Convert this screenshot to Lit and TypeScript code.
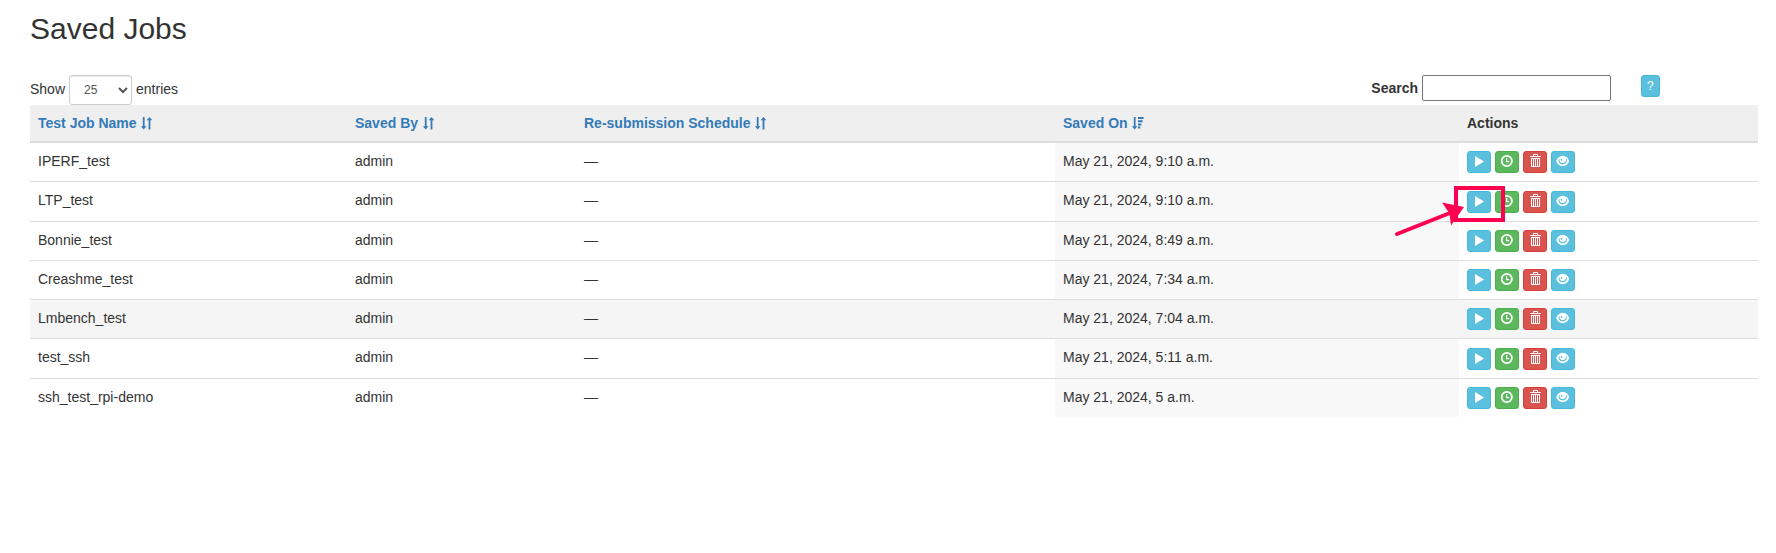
import { LitElement, html, css, svg, nothing } from "lit";
import { customElement, state } from "lit/decorators.js";
import { classMap } from "lit/directives/class-map.js";

interface Job {
  name: string;
  user: string;
  schedule: string;
  saved: string;
  active?: boolean;
  marked?: boolean;
}

const JOBS: Job[] = [
  { name: "IPERF_test", user: "admin", schedule: "—", saved: "May 21, 2024, 9:10 a.m." },
  { name: "LTP_test", user: "admin", schedule: "—", saved: "May 21, 2024, 9:10 a.m.", marked: true },
  { name: "Bonnie_test", user: "admin", schedule: "—", saved: "May 21, 2024, 8:49 a.m." },
  { name: "Creashme_test", user: "admin", schedule: "—", saved: "May 21, 2024, 7:34 a.m." },
  { name: "Lmbench_test", user: "admin", schedule: "—", saved: "May 21, 2024, 7:04 a.m.", active: true },
  { name: "test_ssh", user: "admin", schedule: "—", saved: "May 21, 2024, 5:11 a.m." },
  { name: "ssh_test_rpi-demo", user: "admin", schedule: "—", saved: "May 21, 2024, 5 a.m." },
];

const COLUMNS = [
  { label: "Test Job Name", sorted: false },
  { label: "Saved By", sorted: false },
  { label: "Re-submission Schedule", sorted: false },
  { label: "Saved On", sorted: true },
];

const ICONS = {
  sort: svg`<path d="M2.8 0h1.8v9.3h1.9l-2.8 3.2l-2.8 -3.2h1.9z M8.6 12.5v-9.3h-1.9l2.8 -3.2l2.8 3.2h-1.9v9.3z"/>`,
  sortDesc: svg`<path d="M2.8 0h1.8v9.3h1.9l-2.8 3.2l-2.8 -3.2h1.9z M7 0h5.6v2h-5.6z M7 3.2h4.6v2h-4.6z M7 6.4h3.4v2h-3.4z M7 9.6h2.3v2h-2.3z"/>`,
  play: svg`<path d="M2 1L11 6.5L2 12z"/>`,
  clock: svg`<path fill-rule="evenodd" d="M5.8 0a6 6 0 1 1 0 12a6 6 0 1 1 0 -12z M5.8 1.8a4.2 4.2 0 1 0 0 8.4a4.2 4.2 0 1 0 0 -8.4z M5 3h1.2v3h2v1.2h-3.2z"/>`,
  trash: svg`<path transform="matrix(0.01 0 0 -0.01 0 12)" fill-rule="evenodd" d="M500 1300h300q41 0 70.5 -29.5t29.5 -70.5v-100h275q10 0 17.5 -7.5t7.5 -17.5v-75h-1100v75q0 10 7.5 17.5t17.5 7.5h275v100q0 41 29.5 70.5t70.5 29.5zM500 1200v-100h300v100h-300zM1100 900v-800q0 -41 -29.5 -70.5t-70.5 -29.5h-700q-41 0 -70.5 29.5t-29.5 70.5v800h900zM300 800v-700h100v700h-100zM500 800v-700h100v700h-100zM700 800v-700h100v700h-100zM900 800v-700h100v700h-100z"/>`,
  eye: svg`<path fill-rule="evenodd" d="M5.7 0.8C8.7 0.8 11.2 3.1 12.2 6C11.2 8.9 8.7 11.2 5.7 11.2C2.7 11.2 0.2 8.9 -0.8 6C0.2 3.1 2.7 0.8 5.7 0.8z M1.7 4.4C1 7.2 2.9 9.3 5.7 9.3C8.5 9.3 10.4 7.2 9.7 4.4L8.8 3.5C9.5 6.2 8.1 8 5.7 8C3.3 8 1.9 6.2 2.6 3.5z M4.7 3.8a1.1 1.1 0 0 0 -1 1.2l0.8 0.9l1.2 -0.9z"/>`,
};

@customElement("app-root")
export class AppRoot extends LitElement {
  @state() private query = "";

  static styles = css`
    :host {
      display: block;
      box-sizing: border-box;
      padding: 12px 18px 40px 30px;
      background: #fff;
      color: #333;
      font: 14px/20px "Liberation Sans", Arial, sans-serif;
    }
    .title {
      margin: 0 0 30px;
      font-size: 30px;
      line-height: 33px;
      font-weight: 400;
    }
    .toolbar {
      display: flex;
      align-items: flex-start;
    }
    .length { flex: 1; }
    .length label {
      display: flex;
      align-items: baseline;
      gap: 4px;
    }
    select {
      box-sizing: border-box;
      width: 63px;
      height: 30px;
      padding: 5px 10px;
      border: 1px solid #ccc;
      border-radius: 3px;
      background: #fff;
      box-shadow: inset 0 1px 1px rgba(0, 0, 0, 0.075);
      color: #555;
      font: 12px/18px "Liberation Sans", Arial, sans-serif;
    }
    .search {
      display: flex;
      align-items: center;
      gap: 4px;
      font-weight: 700;
    }
    .search input {
      box-sizing: border-box;
      width: 189px;
      height: 26px;
      padding: 1px 4px;
      border: 1px solid #767676;
      border-radius: 2px;
      background: #fff;
      color: inherit;
      font: 14px/20px "Liberation Sans", Arial, sans-serif;
    }
    .help {
      display: flex;
      width: 117px;
      margin-left: 30px;
    }
    .btn {
      display: inline-block;
      box-sizing: border-box;
      height: 22px;
      padding: 1px 5px;
      border: 1px solid #46b8da;
      border-radius: 3px;
      background: #5bc0de;
      color: #fff;
      font: 12px/18px "Liberation Sans", Arial, sans-serif;
      vertical-align: middle;
      cursor: pointer;
    }
    .btn.success {
      border-color: #4cae4c;
      background: #5cb85c;
    }
    .btn.danger {
      border-color: #d43f3a;
      background: #d9534f;
    }
    .glyph {
      display: block;
      width: 12px;
      height: 12px;
      margin: 2px 0 4px;
      fill: currentColor;
      overflow: visible;
    }
    table {
      width: 100%;
      table-layout: fixed;
      border-collapse: collapse;
      border-spacing: 0;
    }
    .c-name { width: 317px; }
    .c-user { width: 229px; }
    .c-schedule { width: 479px; }
    .c-saved { width: 404px; }
    .c-actions { width: 299px; }
    th {
      padding: 8px;
      border-bottom: 2px solid #ddd;
      background: #efefef;
      text-align: left;
      vertical-align: bottom;
    }
    th a {
      color: #337ab7;
      text-decoration: none;
    }
    .sort {
      width: 13px;
      height: 13px;
      fill: currentColor;
      vertical-align: -2px;
    }
    td {
      padding: 8px;
      border-top: 1px solid #ddd;
      vertical-align: top;
    }
    .sorted { background: #f8f8f8; }
    .active td { background: #f5f5f5; }
    .actions {
      position: relative;
      white-space: nowrap;
    }
    .marker {
      position: absolute;
      left: -65px;
      top: 2px;
      width: 114px;
      height: 54px;
      color: #ff0051;
      pointer-events: none;
    }
  `;

  private button(icon: keyof typeof ICONS, label: string, kind = "") {
    return html`<button type="button" class=${("btn " + kind).trim()} aria-label=${label}>
      <svg class="glyph" viewBox="0 0 12 12" aria-hidden="true">${ICONS[icon]}</svg>
    </button>`;
  }

  private marker() {
    return html`<svg class="marker" viewBox="0 0 114 54" aria-hidden="true">
      <rect x="62" y="4" width="47" height="32" fill="none" stroke="currentColor" stroke-width="4" />
      <path d="M3 50L56 29" stroke="currentColor" stroke-width="4" stroke-linecap="round" />
      <path d="M48 18.5L70 23L57 41.5L55.5 29.5z" fill="currentColor" />
    </svg>`;
  }

  private row(job: Job) {
    return html`<tr class=${classMap({ active: !!job.active })}>
      <td>${job.name}</td>
      <td>${job.user}</td>
      <td>${job.schedule}</td>
      <td class="sorted">${job.saved}</td>
      <td class="actions">
        ${this.button("play", "Submit " + job.name)}
        ${this.button("clock", "Schedule " + job.name, "success")}
        ${this.button("trash", "Delete " + job.name, "danger")}
        ${this.button("eye", "View " + job.name)}
        ${job.marked ? this.marker() : nothing}
      </td>
    </tr>`;
  }

  render() {
    const needle = this.query.toLowerCase();
    const jobs = JOBS.filter((job) => job.name.toLowerCase().includes(needle));
    return html`
      <h2 class="title">Saved Jobs</h2>
      <div class="toolbar">
        <div class="length">
          <label>
            <span>Show</span>
            <select>
              <option>10</option>
              <option selected>25</option>
              <option>50</option>
              <option>100</option>
            </select>
            <span>entries</span>
          </label>
        </div>
        <label class="search">
          <span>Search</span>
          <input
            type="text"
            .value=${this.query}
            @input=${(e: Event) => (this.query = (e.target as HTMLInputElement).value)}
          />
        </label>
        <div class="help"><button type="button" class="btn" aria-label="Help">?</button></div>
      </div>
      <table>
        <colgroup>
          <col class="c-name" />
          <col class="c-user" />
          <col class="c-schedule" />
          <col class="c-saved" />
          <col class="c-actions" />
        </colgroup>
        <thead>
          <tr>
            ${COLUMNS.map(
              (c) => html`<th>
                <a href="#">${c.label}
                  <svg class="sort" viewBox="0 0 13 13" aria-hidden="true">${c.sorted ? ICONS.sortDesc : ICONS.sort}</svg></a>
              </th>`
            )}
            <th>Actions</th>
          </tr>
        </thead>
        <tbody>
          ${jobs.map((job) => this.row(job))}
        </tbody>
      </table>
    `;
  }
}
